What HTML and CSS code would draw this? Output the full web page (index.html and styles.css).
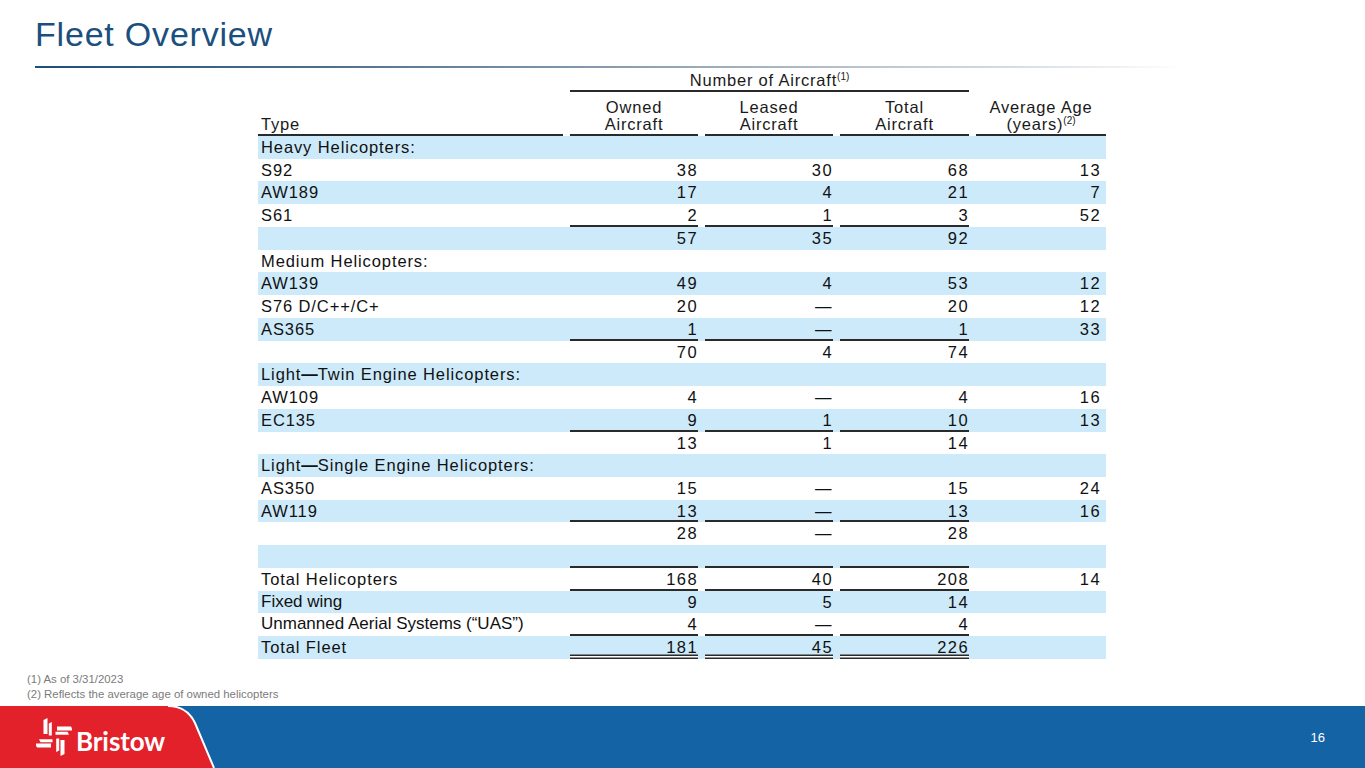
FILE: index.html
```html
<!DOCTYPE html>
<html lang="en">
<head>
<meta charset="utf-8">
<title>Fleet Overview</title>
<link rel="stylesheet" href="styles.css">
</head>
<body>
<div class="slide">
  <header class="title-area">
    <h1 class="title">Fleet Overview</h1>
    <div class="rule"></div>
  </header>

  <section class="fleet">
    <div class="thead">
      <div class="h-group">Number of Aircraft<sup>(1)</sup></div>
      <div class="h-type">Type</div>
      <div class="h-col">Owned<br>Aircraft</div>
      <div class="h-col">Leased<br>Aircraft</div>
      <div class="h-col">Total<br>Aircraft</div>
      <div class="h-age">Average Age<br>(years)<sup>(2)</sup></div>
    </div>

    <div class="rows">
      <div class="row"><div class="lbl">Heavy Helicopters:</div><div></div><div></div><div></div><div></div></div>
      <div class="row"><div class="lbl">S92</div><div class="n">38</div><div class="n">30</div><div class="n">68</div><div class="n age">13</div></div>
      <div class="row"><div class="lbl">AW189</div><div class="n">17</div><div class="n">4</div><div class="n">21</div><div class="n age">7</div></div>
      <div class="row"><div class="lbl">S61</div><div class="n u">2</div><div class="n u">1</div><div class="n u">3</div><div class="n age">52</div></div>
      <div class="row"><div class="lbl"></div><div class="n">57</div><div class="n">35</div><div class="n">92</div><div></div></div>

      <div class="row"><div class="lbl">Medium Helicopters:</div><div></div><div></div><div></div><div></div></div>
      <div class="row"><div class="lbl">AW139</div><div class="n">49</div><div class="n">4</div><div class="n">53</div><div class="n age">12</div></div>
      <div class="row"><div class="lbl">S76 D/C++/C+</div><div class="n">20</div><div class="n">—</div><div class="n">20</div><div class="n age">12</div></div>
      <div class="row"><div class="lbl">AS365</div><div class="n u">1</div><div class="n u">—</div><div class="n u">1</div><div class="n age">33</div></div>
      <div class="row"><div class="lbl"></div><div class="n">70</div><div class="n">4</div><div class="n">74</div><div></div></div>

      <div class="row"><div class="lbl">Light<b class="dash">—</b>Twin Engine Helicopters:</div><div></div><div></div><div></div><div></div></div>
      <div class="row"><div class="lbl">AW109</div><div class="n">4</div><div class="n">—</div><div class="n">4</div><div class="n age">16</div></div>
      <div class="row"><div class="lbl">EC135</div><div class="n u">9</div><div class="n u">1</div><div class="n u">10</div><div class="n age">13</div></div>
      <div class="row"><div class="lbl"></div><div class="n">13</div><div class="n">1</div><div class="n">14</div><div></div></div>

      <div class="row"><div class="lbl">Light<b class="dash">—</b>Single Engine Helicopters:</div><div></div><div></div><div></div><div></div></div>
      <div class="row"><div class="lbl">AS350</div><div class="n">15</div><div class="n">—</div><div class="n">15</div><div class="n age">24</div></div>
      <div class="row"><div class="lbl">AW119</div><div class="n u">13</div><div class="n u">—</div><div class="n u">13</div><div class="n age">16</div></div>
      <div class="row"><div class="lbl"></div><div class="n">28</div><div class="n">—</div><div class="n">28</div><div></div></div>
      <div class="row"><div class="lbl"></div><div class="u"></div><div class="u"></div><div class="u"></div><div></div></div>

      <div class="row"><div class="lbl">Total Helicopters</div><div class="n u">168</div><div class="n u">40</div><div class="n u">208</div><div class="n age">14</div></div>
      <div class="row"><div class="lbl plain">Fixed wing</div><div class="n">9</div><div class="n">5</div><div class="n">14</div><div></div></div>
      <div class="row"><div class="lbl plain">Unmanned Aerial Systems (“UAS”)</div><div class="n u">4</div><div class="n u">—</div><div class="n u">4</div><div></div></div>
      <div class="row"><div class="lbl">Total Fleet</div><div class="n dbl">181</div><div class="n dbl">45</div><div class="n dbl">226</div><div></div></div>
    </div>
  </section>

  <div class="notes">
    <p>(1) As of 3/31/2023</p>
    <p>(2) Reflects the average age of owned helicopters</p>
  </div>

  <footer class="footer">
    <svg class="footer-bg" width="232" height="62" viewBox="0 0 232 62" aria-hidden="true">
      <path d="M0 0 H168 Q187 0 195 17 L214 62 H0 Z" fill="#e3212b"/>
      <path d="M168 0 Q187 0 195 17 L214 62" fill="none" stroke="#ffffff" stroke-width="2"/>
    </svg>
    <div class="brand">
      <svg class="mark" width="36" height="38" viewBox="-18 -19 36 38" aria-hidden="true">
        <g fill="#ffffff">
          <g>
            <polygon points="-10.5,-3 -6.5,-3 -6.5,-19 -10.5,-17"/>
            <polygon points="-5.2,-1.5 -2.2,-1.5 -2.2,-15 -5.2,-13.5"/>
          </g>
          <g transform="rotate(90)">
            <polygon points="-10.5,-3 -6.5,-3 -6.5,-19 -10.5,-17"/>
            <polygon points="-5.2,-1.5 -2.2,-1.5 -2.2,-15 -5.2,-13.5"/>
          </g>
          <g transform="rotate(180)">
            <polygon points="-10.5,-3 -6.5,-3 -6.5,-19 -10.5,-17"/>
            <polygon points="-5.2,-1.5 -2.2,-1.5 -2.2,-15 -5.2,-13.5"/>
          </g>
          <g transform="rotate(270)">
            <polygon points="-10.5,-3 -6.5,-3 -6.5,-19 -10.5,-17"/>
            <polygon points="-5.2,-1.5 -2.2,-1.5 -2.2,-15 -5.2,-13.5"/>
          </g>
        </g>
      </svg>
      <span class="wordmark">Bristow</span>
    </div>
    <div class="page-num">16</div>
  </footer>
</div>
</body>
</html>
```

FILE: styles.css
```css
* { box-sizing: border-box; }

html, body {
  margin: 0;
  padding: 0;
  background: #ffffff;
}

.slide {
  width: 1365px;
  height: 768px;
  display: flex;
  flex-direction: column;
  font-family: "Liberation Sans", Arial, sans-serif;
  color: #111111;
  overflow: hidden;
}

/* ---------- title ---------- */
.title-area {
  padding-left: 35px;
}

.title {
  margin: 14px 0 0 0;
  font-size: 34px;
  line-height: 40px;
  font-weight: normal;
  letter-spacing: 0.8px;
  color: #1b4f7e;
}

.rule {
  margin-top: 12px;
  width: 1150px;
  height: 2px;
  background: linear-gradient(to right, #1c4e7b 0%, #4f6e8b 25%, #93a5b5 55%, #d5dce2 85%, rgba(255,255,255,0) 100%);
}

/* ---------- table ---------- */
.fleet {
  margin: 1px 0 0 258px;
  width: 848px;
  font-size: 16.5px;
}

.thead,
.row {
  display: grid;
  grid-template-columns: 305px 128px 128px 129px 130px;
  column-gap: 7px;
}

.thead {
  grid-template-rows: 23px 44px;
  line-height: 17px;
  letter-spacing: 0.8px;
  color: #1a1a1a;
}

.h-group {
  grid-column: 2 / 5;
  grid-row: 1;
  text-align: center;
  line-height: 22px;
  padding-bottom: 2px;
  box-shadow: inset 0 -2px 0 #2a2a2a;
}

.h-type {
  grid-column: 1;
  grid-row: 2;
  align-self: end;
  padding: 0 0 3px 3px;
  box-shadow: inset 0 -2px 0 #2a2a2a;
}

.h-col {
  grid-row: 2;
  align-self: end;
  text-align: center;
  padding-bottom: 3px;
  box-shadow: inset 0 -2px 0 #2a2a2a;
}

.h-age {
  grid-column: 5;
  grid-row: 1 / 3;
  align-self: end;
  text-align: center;
  padding-bottom: 3px;
  box-shadow: inset 0 -2px 0 #2a2a2a;
}

sup {
  font-size: 10px;
  line-height: 0;
  letter-spacing: 0;
  vertical-align: 6px;
}

.row {
  height: 22.74px;
  line-height: 22px;
}

.row:nth-child(odd) {
  background: #cdeafa;
}

.lbl {
  padding-left: 3px;
  letter-spacing: 0.9px;
  white-space: nowrap;
}

.lbl.plain {
  font-size: 17px;
  letter-spacing: 0;
}

.dash {
  font-weight: bold;
  letter-spacing: 0;
}

.n {
  text-align: right;
  letter-spacing: 1.4px;
}

.n.age {
  padding-right: 5px;
}

.u {
  box-shadow: inset 0 -2px 0 #2a2a2a;
}

.dbl {
  box-shadow: inset 0 -1.5px 0 #2a2a2a, inset 0 -3px 0 #ffffff, inset 0 -4.5px 0 #2a2a2a;
}

/* ---------- footnotes ---------- */
.notes {
  margin: 13px 0 0 27px;
  font-size: 11.4px;
  line-height: 15px;
  color: #7b7b7b;
}

.notes p {
  margin: 0;
}

/* ---------- footer ---------- */
.footer {
  position: relative;
  margin-top: auto;
  height: 62px;
  background: #1463a5;
  display: flex;
  align-items: flex-start;
  justify-content: space-between;
  padding: 0 40px 0 36px;
}

.footer-bg {
  position: absolute;
  left: 0;
  top: 0;
}

.brand {
  position: relative;
  display: flex;
  align-items: flex-start;
  gap: 4px;
  margin-top: 12px;
}

.mark {
  display: block;
}

.wordmark {
  margin-top: 10px;
  font-family: Lato, "Open Sans", sans-serif;
  font-weight: bold;
  font-size: 26px;
  line-height: 26px;
  color: #ffffff;
  letter-spacing: -0.1px;
}

.page-num {
  position: relative;
  margin-top: 24px;
  font-family: "Liberation Sans", Arial, sans-serif;
  font-size: 13px;
  line-height: 15px;
  color: #ffffff;
}
```
